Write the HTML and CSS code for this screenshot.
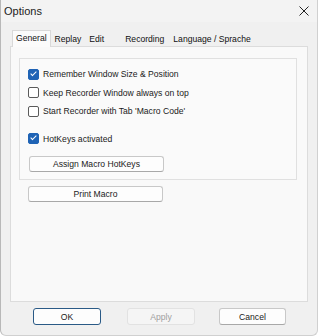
FILE: index.html
```html
<!DOCTYPE html>
<html lang="en">
<head>
<meta charset="UTF-8" />
<title>Options</title>
<link rel="stylesheet" href="styles.css">
</head>
<body>
  <div class="window">
    <!-- Title bar -->
    <div class="titlebar">
      <span class="title">Options</span>
      <span class="close">
        <svg width="10" height="10" viewBox="0 0 10 10"><path d="M0.5 0.5 L9.5 9.5 M9.5 0.5 L0.5 9.5" stroke="#222" stroke-width="1" fill="none"/></svg>
      </span>
    </div>

    <!-- Tabs -->
    <div class="tabs">
      <span class="tab active">General</span>
      <span class="tab">Replay</span>
      <span class="tab">Edit</span>
      <span class="tab tab-wide">Recording</span>
      <span class="tab tab-lang">Language / Sprache</span>
    </div>

    <div class="page">
      <div class="group">
        <label class="check-row"><span class="box checked"></span>Remember Window Size &amp; Position</label>
        <label class="check-row"><span class="box"></span>Keep Recorder Window always on top</label>
        <label class="check-row"><span class="box"></span>Start Recorder with Tab 'Macro Code'</label>
        <label class="check-row spaced"><span class="box checked"></span>HotKeys activated</label>
        <button class="btn wide">Assign Macro HotKeys</button>
      </div>
      <button class="btn wide print">Print Macro</button>
    </div>

    <div class="footer">
      <button class="btn dlg default">OK</button>
      <button class="btn dlg disabled">Apply</button>
      <button class="btn dlg cancel">Cancel</button>
    </div>
  </div>
</body>
</html>
```
FILE: styles.css
```css
body {
  margin: 0;
  font-family: 'Liberation Sans', Arial, sans-serif;
  font-size: 8.6px;
  color: #1a1a1a;
  background: #ffffff;
}
.window {
  width: 316px;
  height: 335px;
  background: #f0f0f0;
  border-left: 1px solid #b8b8b8;
  border-right: 1px solid #d0d0d0;
  border-bottom: 1px solid #d0d0d0;
  border-radius: 0 0 6px 6px;
  display: flex;
  flex-direction: column;
}
.titlebar {
  height: 22px;
  display: flex;
  align-items: center;
  justify-content: space-between;
  padding: 0 8px 0 3px;
  background: #f3f3f3;
}
.title {
  font-size: 11px;
  color: #222;
}
.close {
  display: flex;
  align-items: center;
}
.tabs {
  display: flex;
  align-items: flex-end;
  margin: 8px 0 0 11px;
  height: 16px;
}
.tab {
  padding: 0 4px;
  height: 14px;
  line-height: 14px;
  color: #111;
}
.tab-wide {
  margin-left: 13px;
}
.tab-lang {
  margin-left: 1px;
}
.tab.active {
  height: 16px;
  line-height: 15px;
  background: #fbfbfb;
  border: 1px solid #d9d9d9;
  border-bottom: none;
  margin-bottom: -1px;
  position: relative;
  z-index: 1;
  padding: 0 3px 0 3px;
}
.page {
  margin: 0 9px 0 9px;
  height: 256px;
  background: #f9f9f9;
  border: 1px solid #dcdcdc;
  padding: 11px 10px 0 8px;
  box-sizing: border-box;
}
.group {
  border: 1px solid #e0e0e0;
  background: #fafafa;
  height: 122px;
  box-sizing: border-box;
  padding: 6px 0 0 8px;
  display: flex;
  flex-direction: column;
}
.check-row {
  display: flex;
  align-items: center;
  gap: 4px;
  height: 18.5px;
}
.check-row.spaced {
  margin-top: 9px;
}
.box {
  width: 9px;
  height: 9px;
  border: 1px solid #5a5a5a;
  border-radius: 2px;
  background: #fff;
  position: relative;
}
.box.checked {
  background: #1f63b5;
  border-color: #1f63b5;
}
.box.checked::after {
  content: "";
  position: absolute;
  left: 3px;
  top: 0px;
  width: 2px;
  height: 5px;
  border: solid #fff;
  border-width: 0 1.2px 1.2px 0;
  transform: rotate(45deg);
}
.btn {
  font-family: inherit;
  font-size: 8.6px;
  color: #1a1a1a;
  background: #fdfdfd;
  border: 1px solid #c8c8c8;
  border-bottom-color: #a8a8a8;
  border-radius: 3px;
  height: 16px;
  padding: 0;
}
.btn.wide {
  width: 135px;
  margin-top: 8px;
  margin-left: 1px;
}
.btn.print {
  margin-top: 6px;
  margin-left: 9px;
}
.footer {
  display: flex;
  gap: 26px;
  padding: 6px 0 0 32px;
}
.btn.dlg {
  width: 68px;
  height: 17px;
}
.btn.cancel {
  margin-left: -2px;
  width: 67px;
}
.btn.default {
  border: 1px solid #2a5a86;
}
.btn.disabled {
  color: #a0a0a0;
  border-color: #e2e2e2;
  background: #f5f5f5;
}
```
